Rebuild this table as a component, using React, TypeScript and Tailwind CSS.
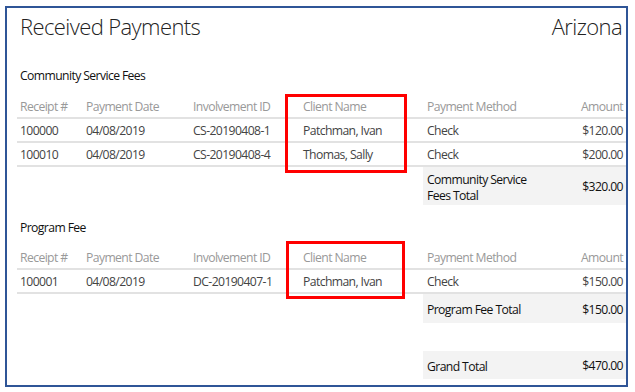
import React from "react";

type Row = { receipt: string; date: string; inv: string; client: string; method: string; amount: string };

const cols = "grid grid-cols-[66px_107px_110px_124px_1fr_80px]";

function Table({ rows }: { rows: Row[] }) {
  return (
    <div className="flex flex-col">
      <div className={`${cols} h-[24px] items-center border-b-2 border-[#e2e2e2] text-[#999999]`}>
        <div className="pl-[3px] pt-[1px]">Receipt #</div>
        <div className="pl-[3px] pt-[1px]">Payment Date</div>
        <div className="pl-[3px] pt-[1px]">Involvement ID</div>
        <div className="pl-[3px] pt-[1px]">Client Name</div>
        <div className="pl-[3px] pt-[1px]">Payment Method</div>
        <div className="pr-[3px] pt-[1px] text-right">Amount</div>
      </div>
      {rows.map((r) => (
        <div key={r.receipt} className={`${cols} h-[24px] items-center border-b-2 border-[#e2e2e2] text-[#444444]`}>
          <div className="pl-[3px] pt-[1px]">{r.receipt}</div>
          <div className="pl-[3px] pt-[1px]">{r.date}</div>
          <div className="pl-[3px] pt-[1px]">{r.inv}</div>
          <div className="pl-[3px] pt-[1px]">{r.client}</div>
          <div className="pl-[3px] pt-[1px]">{r.method}</div>
          <div className="pr-[3px] pt-[1px] text-right">{r.amount}</div>
        </div>
      ))}
    </div>
  );
}

function TotalBox({ label, amount, h }: { label: string; amount: string; h: string }) {
  return (
    <div className="flex">
      <div className="w-[406px] shrink-0" />
      <div className={`grid flex-1 grid-cols-[1fr_80px] items-center bg-[#f3f3f3] text-[#111111] ${h}`}>
        <div className="w-[120px] pl-[4px] pt-[3px] leading-[16px]">{label}</div>
        <div className="pr-[3px] pt-[2px] text-right">{amount}</div>
      </div>
    </div>
  );
}

export default function App() {
  const font = "[font-family:'Open_Sans','Noto_Sans',sans-serif]";
  return (
    <div className={`h-[392px] w-[635px] bg-white pl-[5px] pt-[6px] text-[12.2px] leading-[20px] tracking-[-0.6px] ${font}`}>
      <div className="relative flex h-[381px] w-[623px] flex-col border-2 border-[#2f5597] pl-[10px]">
        <div className="mt-[2px] flex h-[32px] items-center justify-between pl-[3px] pr-[4px] text-[22px] font-light leading-[32px] tracking-[-0.6px] text-[#222222]">
          <span>Received Payments</span>
          <span>Arizona</span>
        </div>

        <div className="mt-[24px] h-[20px] pl-[3px] text-[#111111]">Community Service Fees</div>
        <div className="mt-[9px]">
          <Table
            rows={[
              { receipt: "100000", date: "04/08/2019", inv: "CS-20190408-1", client: "Patchman, Ivan", method: "Check", amount: "$120.00" },
              { receipt: "100010", date: "04/08/2019", inv: "CS-20190408-4", client: "Thomas, Sally", method: "Check", amount: "$200.00" },
            ]}
          />
        </div>
        <TotalBox label="Community Service Fees Total" amount="$320.00" h="h-[38px]" />

        <div className="mt-[13px] h-[20px] pl-[3px] text-[#111111]">Program Fee</div>
        <div className="mt-[8px]">
          <Table
            rows={[
              { receipt: "100001", date: "04/08/2019", inv: "DC-20190407-1", client: "Patchman, Ivan", method: "Check", amount: "$150.00" },
            ]}
          />
        </div>
        <TotalBox label="Program Fee Total" amount="$150.00" h="h-[29px]" />

        <div className="mt-[28px]">
          <TotalBox label="Grand Total" amount="$470.00" h="h-[28px]" />
        </div>

        <div className="pointer-events-none absolute left-[278px] top-[86px] h-[79px] w-[122px] border-[3px] border-[#ff0000]" />
        <div className="pointer-events-none absolute left-[279px] top-[233px] h-[58px] w-[119px] border-[3px] border-[#ff0000]" />
      </div>
    </div>
  );
}
